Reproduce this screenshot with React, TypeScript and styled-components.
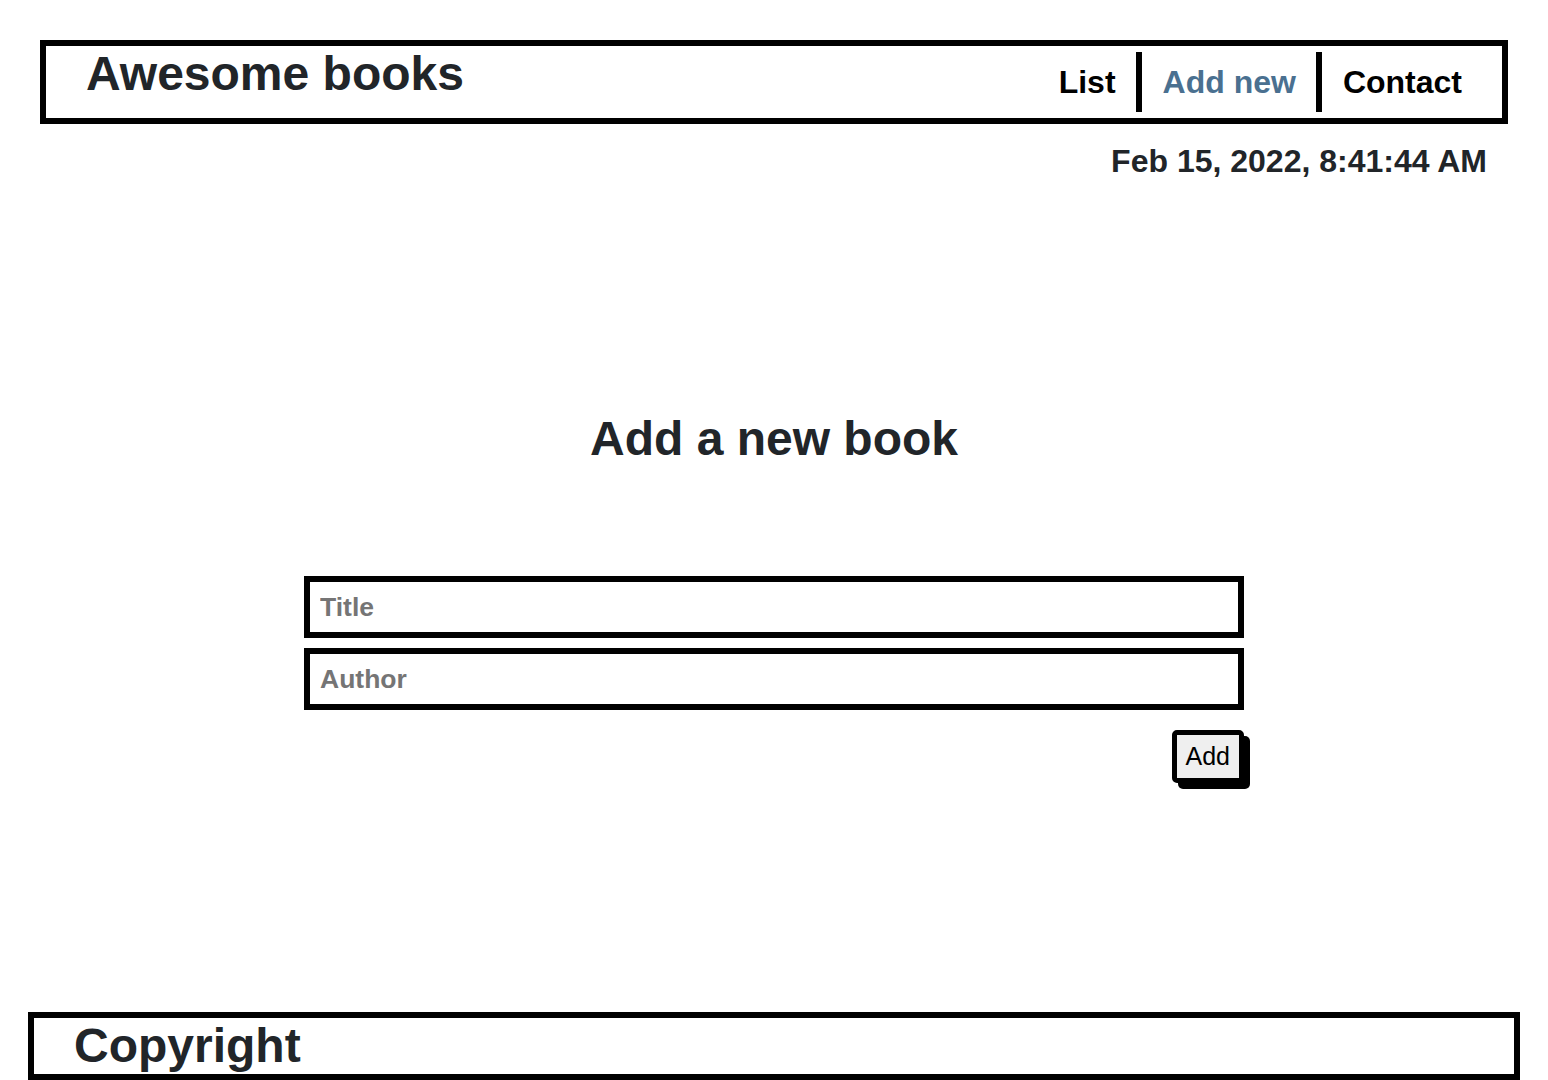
import styled, { createGlobalStyle } from 'styled-components';

const GlobalStyle = createGlobalStyle`
  * {
    box-sizing: border-box;
  }

  body {
    margin: 0;
    font-family: 'Liberation Sans', Arial, sans-serif;
    color: #212529;
    background: #fff;
  }
`;

const links = [
  { label: 'List', active: false },
  { label: 'Add new', active: true },
  { label: 'Contact', active: false },
];

const App = () => {
  return (
    <>
      <GlobalStyle />
      <Page>
        <Header>
          <Logo>Awesome books</Logo>
          <NavList>
            {links.map((link, i) => (
              <NavItem key={link.label} $first={i === 0}>
                <NavLink href="#" $active={link.active}>
                  {link.label}
                </NavLink>
              </NavItem>
            ))}
          </NavList>
        </Header>
        <DateLine>Feb 15, 2022, 8:41:44 AM</DateLine>
        <Main>
          <SectionTitle>Add a new book</SectionTitle>
          <Form onSubmit={(e) => e.preventDefault()}>
            <Field type="text" placeholder="Title" />
            <Field type="text" placeholder="Author" />
            <AddBtn type="submit">Add</AddBtn>
          </Form>
        </Main>
        <Footer>
          <FooterText>Copyright</FooterText>
        </Footer>
      </Page>
    </>
  );
};

export default App;

const Page = styled.div`
  display: flex;
  flex-direction: column;
  min-height: 100vh;
  padding-top: 40px;
`;

const Header = styled.header`
  margin: 0 40px;
  height: 84px;
  border: 6px solid #000;
  display: flex;
  justify-content: space-between;
  align-items: flex-start;
  padding: 0 20px 0 40px;
`;

const Logo = styled.h1`
  margin: 0;
  font-size: 48px;
  line-height: normal;
  font-weight: 700;
  color: #212529;
`;

const NavList = styled.ul`
  list-style: none;
  margin: 6px 0;
  padding: 0;
  display: flex;
`;

const NavItem = styled.li<{ $first: boolean }>`
  height: 60px;
  display: flex;
  align-items: center;
  padding: 0 20px 0 21px;
  border-left: ${(p) => (p.$first ? 'none' : '6px solid #000')};
`;

const NavLink = styled.a<{ $active: boolean }>`
  font-size: 32px;
  font-weight: 700;
  text-decoration: none;
  color: ${(p) => (p.$active ? '#4a7090' : '#000')};
`;

const DateLine = styled.p`
  margin: 19px 61px 0 0;
  text-align: right;
  font-size: 32px;
  font-weight: 700;
  line-height: normal;
  color: #212529;
`;

const Main = styled.main`
  flex: 1;
  display: flex;
  flex-direction: column;
  align-items: center;
  padding-top: 231px;
`;

const SectionTitle = styled.h2`
  margin: 0;
  font-size: 48px;
  line-height: normal;
  font-weight: 700;
  color: #212529;
`;

const Form = styled.form`
  width: 940px;
  margin-top: 110px;
  display: flex;
  flex-direction: column;
  align-items: flex-end;
  gap: 10px;
`;

const Field = styled.input`
  width: 100%;
  height: 62px;
  border: 6px solid #000;
  padding: 0 10px;
  font-family: 'Liberation Sans', Arial, sans-serif;
  font-size: 26.5px;
  font-weight: 700;
  color: #212529;
  outline: none;

  &::placeholder {
    color: #757575;
  }
`;

const AddBtn = styled.button`
  margin-top: 10px;
  height: 53px;
  padding: 0 9px;
  border: 5px solid #000;
  border-radius: 5px;
  background: #efefef;
  box-shadow: 6px 6px 0 #000;
  font-family: 'Liberation Sans', Arial, sans-serif;
  font-size: 25px;
  color: #000;
  cursor: pointer;
`;

const Footer = styled.footer`
  margin: 0 28px;
  height: 68px;
  border: 6px solid #000;
  padding: 0 40px;
`;

const FooterText = styled.h2`
  margin: 0;
  font-size: 48px;
  line-height: normal;
  font-weight: 700;
  color: #212529;
`;
